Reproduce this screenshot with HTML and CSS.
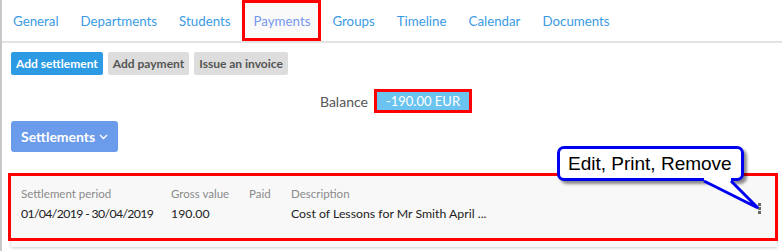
FILE: index.html
```html
<!DOCTYPE html>
<html lang="en">
<head>
    <meta charset="UTF-8">
    <title>Payments</title>
    <link rel="stylesheet" href="styles.css">
</head>
<body>
    <div class="page">
        <nav class="tabs">
            <a class="tab">General</a>
            <a class="tab">Departments</a>
            <a class="tab">Students</a>
            <a class="tab active">Payments</a>
            <a class="tab">Groups</a>
            <a class="tab">Timeline</a>
            <a class="tab">Calendar</a>
            <a class="tab">Documents</a>
        </nav>

        <div class="actions">
            <button class="btn btn-primary">Add settlement</button>
            <button class="btn btn-default">Add payment</button>
            <button class="btn btn-default">Issue an invoice</button>
        </div>

        <div class="balance">
            <span class="balance-label">Balance</span>
            <span class="balance-value">-190.00 EUR</span>
        </div>

        <button class="dropdown">Settlements
            <svg class="chevron" width="9" height="6" viewBox="0 0 9 6"><path d="M1 1l3.5 3.5L8 1" fill="none" stroke="#fff" stroke-width="1.4"/></svg>
        </button>

        <div class="card">
            <div class="card-row">
                <div class="col">
                    <div class="label">Settlement period</div>
                    <div class="value value-date">01/04/2019 - 30/04/2019</div>
                </div>
                <div class="col">
                    <div class="label">Gross value</div>
                    <div class="value">190.00</div>
                </div>
                <div class="col">
                    <div class="label">Paid</div>
                    <div class="value"></div>
                </div>
                <div class="col">
                    <div class="label">Description</div>
                    <div class="value">Cost of Lessons for Mr Smith April ...</div>
                </div>
                <div class="kebab">
                    <span></span><span></span><span></span>
                </div>
            </div>
            <div class="highlight"></div>
        </div>

        <!-- annotation callout -->
        <div class="callout">
            Edit, Print, Remove
            <svg class="callout-tail" width="64" height="40" viewBox="0 0 64 40">
                <polygon points="4,4 31,4 31,9 58,36 4,9" fill="#fff"/>
                <path d="M4 9 L58 36 L31 9" fill="none" stroke="#0000f0" stroke-width="3" stroke-linejoin="miter"/>
            </svg>
        </div>
    </div>
</body>
</html>
```

FILE: styles.css
```css
body {
    margin: 0;
    font-family: "Lato", "Liberation Sans", sans-serif;
    background-color: #fff;
    color: #333;
}
.page {
    position: relative;
    min-height: 251px;
    border-left: 2px solid #c8c8c8;
    box-sizing: border-box;
}

/* tabs */
.tabs {
    display: flex;
    height: 41px;
    border-bottom: 2px solid #e3e3e3;
}
.tab {
    padding: 0 11px;
    line-height: 42px;
    font-size: 13.3px;
    color: #3a9be4;
    cursor: pointer;
}
.tab.active {
    padding: 0 11px 0 12px;
    color: #7797ee;
    background-color: #fafafa;
    outline: 3px solid #f00;
    outline-offset: -3px;
}

/* action buttons */
.actions {
    display: flex;
    gap: 5px;
    margin: 9px 0 0 9px;
}
.btn {
    height: 23px;
    padding: 0 5px;
    border: none;
    border-radius: 2px;
    font-family: inherit;
    font-size: 12px;
    font-weight: bold;
    cursor: pointer;
}
.btn-primary {
    background-color: #2d9ae4;
    color: #fff;
}
.btn-default {
    background-color: #dddddd;
    color: #555;
}

/* balance */
.balance {
    display: flex;
    justify-content: center;
    align-items: center;
    gap: 6px;
    margin-top: 14px;
    padding-left: 8px;
}
.balance-label {
    font-size: 14px;
    color: #555;
}
.balance-value {
    display: block;
    padding: 0 9px;
    line-height: 18px;
    font-size: 13px;
    color: #fff;
    background-color: #6bc4ef;
    border: 3px solid #f00;
}

/* dropdown */
.dropdown {
    display: flex;
    align-items: center;
    gap: 4px;
    height: 31px;
    margin: 8px 0 0 9px;
    padding: 0 10px;
    border: none;
    border-radius: 3px;
    background-color: #6b9beb;
    color: #fff;
    font-family: inherit;
    font-size: 14px;
    font-weight: bold;
}

/* settlement card */
.card {
    position: relative;
    margin: 24px 5px 0 9px;
    height: 71px;
    background-color: #f8f8f8;
    box-shadow: 0 1px 3px rgba(0, 0, 0, 0.2);
}
.card-row {
    display: grid;
    grid-template-columns: 150px 78px 42px 1fr 20px;
    padding: 10px 0 0 10px;
}
.label {
    font-size: 11.5px;
    color: #8a8a8a;
    line-height: 16px;
    white-space: nowrap;
}
.value {
    font-size: 12.3px;
    color: #222;
    line-height: 18px;
    margin-top: 3px;
    min-height: 18px;
    white-space: nowrap;
}
.value-date {
    letter-spacing: -0.65px;
}
.kebab {
    display: flex;
    flex-direction: column;
    gap: 1px;
    align-self: start;
    margin-top: 17px;
    padding-left: 1px;
}
.kebab span {
    width: 3px;
    height: 3px;
    background-color: #666;
}
.highlight {
    position: absolute;
    top: -3px;
    left: -3px;
    right: -1px;
    bottom: 6px;
    border: 3px solid #f00;
    pointer-events: none;
}

/* annotation */
.callout {
    position: absolute;
    left: 555px;
    top: 146px;
    width: 173px;
    height: 29px;
    padding-left: 8px;
    border: 3px solid #0000f0;
    border-radius: 7px;
    background-color: #fff;
    box-shadow: 3px 3px 3px rgba(0, 0, 0, 0.45);
    font-family: "Liberation Sans", Arial, sans-serif;
    font-size: 19px;
    line-height: 29px;
    color: #000;
}
.callout-tail {
    position: absolute;
    left: 140px;
    top: 23px;
    overflow: visible;
}
```
